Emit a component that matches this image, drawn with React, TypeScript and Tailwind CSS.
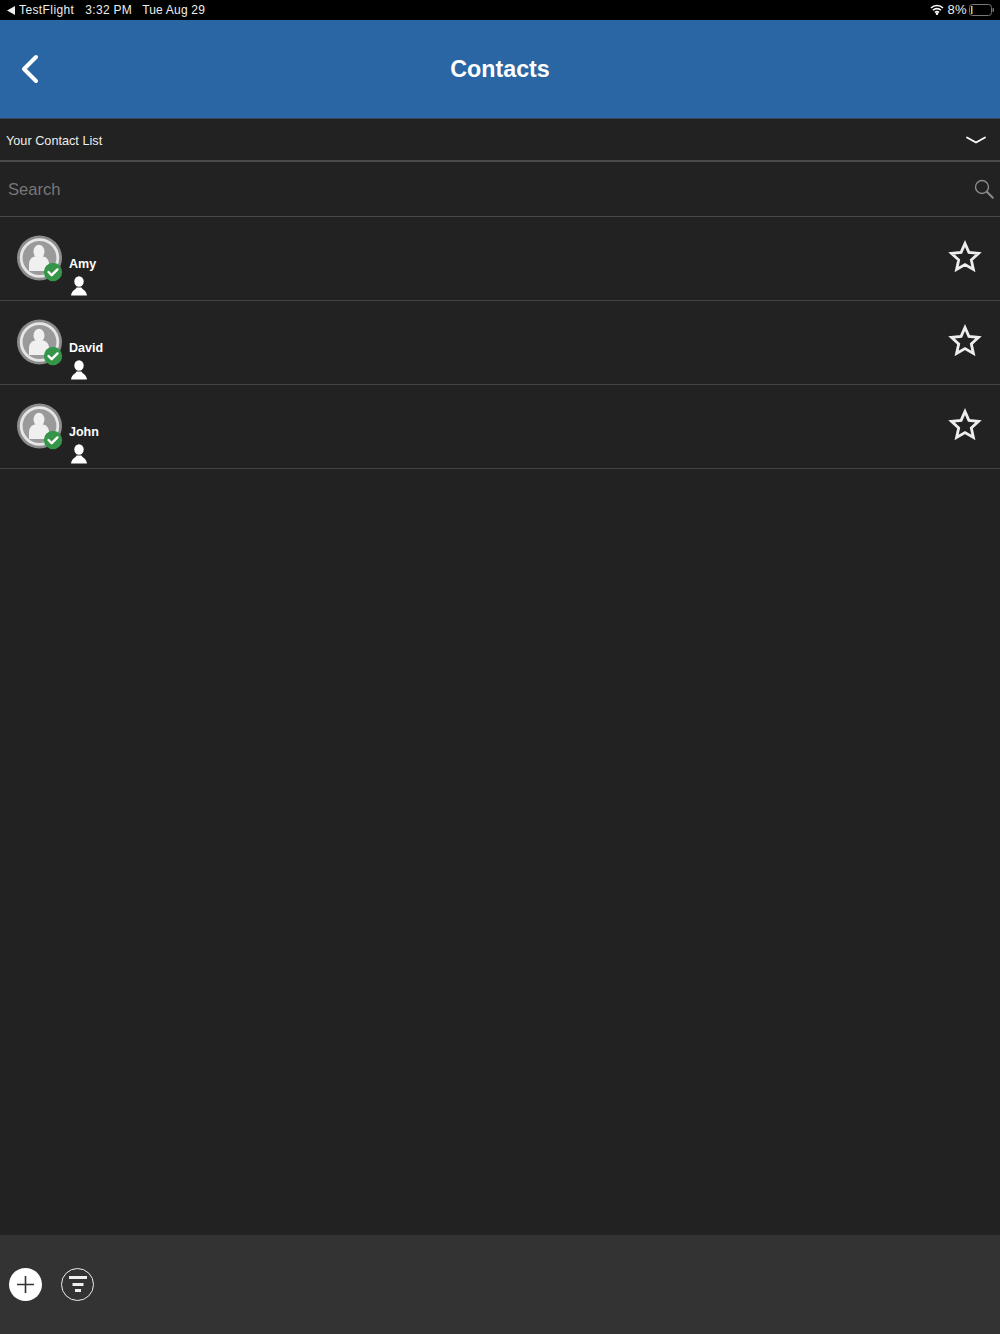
const contacts = ['Amy', 'David', 'John'];

function Avatar() {
  return (
    <svg width="48" height="52" viewBox="0 0 48 52" className="shrink-0">
      <circle cx="23.500" cy="23" r="22.500" fill="#8c8c8c" />
      <circle cx="23.500" cy="23" r="18.300" fill="#9a9a9a" stroke="#e6e6e6" strokeWidth="2.800" />
      <ellipse cx="23" cy="16.500" rx="5.500" ry="6.800" fill="#f0f0f0" />
      <path d="M13 36v-7c0-4 2-6.500 5.500-7.500h9c3.500 1 5.500 3.500 5.500 7.500v7z" fill="#f0f0f0" />
      <circle cx="37" cy="37" r="9.200" fill="#35964a" />
      <path d="M32.500 37l3.200 3.200 5.800-5.800" fill="none" stroke="#ffffff" strokeWidth="2.400" strokeLinecap="round" strokeLinejoin="round" />
    </svg>
  );
}

function Person() {
  return (
    <svg width="16" height="20" viewBox="0 0 16 20" className="block">
      <ellipse cx="8" cy="5.500" rx="4.700" ry="5.300" fill="#ffffff" />
      <path d="M0 19.500c0.300-3 2-5 4.500-6.500l1-1.500h5l1 1.500c2.500 1.500 4.200 3.500 4.500 6.500z" fill="#ffffff" />
    </svg>
  );
}

function Star() {
  return (
    <svg width="34" height="32" viewBox="0 0 34 32">
      <path
        d="M17 3.500l3.900 8.900 9.600 1-7.200 6.500 2.100 9.500-8.400-4.900-8.400 4.900 2.100-9.500-7.200-6.500 9.600-1z"
        fill="none"
        stroke="#eeeeee"
        strokeWidth="2.800"
        strokeLinejoin="miter"
      />
    </svg>
  );
}

export default function App() {
  return (
    <div className="flex h-[1334px] flex-col overflow-hidden bg-[#222222] font-['Liberation_Sans',Arial,sans-serif] text-white">
      <div className="flex h-5 shrink-0 items-center justify-between bg-black pl-[7px] pr-[5px] text-xs tracking-[0.4px] text-[#eeeeee]">
        <div className="flex items-center">
          <svg width="8" height="9" viewBox="0 0 8 9" className="mr-[4px]">
            <path d="M0 4.500L8 0v9z" fill="#eeeeee" />
          </svg>
          <span>TestFlight</span>
          <span className="ml-[11px] tracking-[0.3px]">3:32 PM</span>
          <span className="ml-[10px] tracking-[0.2px]">Tue Aug 29</span>
        </div>
        <div className="flex items-center">
          <svg width="14" height="11" viewBox="0 0 14 11" className="mr-[3px]">
            <path d="M1 4a8.500 8.500 0 0 1 12 0M3 6.300a5.600 5.600 0 0 1 8 0M5 8.500a2.800 2.800 0 0 1 4 0" fill="none" stroke="#ffffff" strokeWidth="1.600" />
            <circle cx="7" cy="9.700" r="1.300" fill="#ffffff" />
          </svg>
          <span className="text-[13px]">8%</span>
          <svg width="26" height="12" viewBox="0 0 26 12" className="ml-[2px]">
            <rect x="0.500" y="0.500" width="22" height="11" rx="3" fill="none" stroke="#777777" />
            <rect x="2" y="2" width="1.500" height="8" fill="#f2c230" />
            <rect x="23.500" y="4" width="1.500" height="4" rx="0.700" fill="#777777" />
          </svg>
        </div>
      </div>

      <div className="relative flex h-[99px] shrink-0 items-center justify-center border-b border-[#35465c] bg-[#2a66a3]">
        <svg width="18" height="30" viewBox="0 0 18 30" className="absolute left-[21px] top-[34px]">
          <path d="M15 3L3 15l12 12" fill="none" stroke="#ffffff" strokeWidth="4" strokeLinecap="round" strokeLinejoin="round" />
        </svg>
        <h1 className="pt-[1px] text-[23.300px] font-bold">Contacts</h1>
      </div>

      <div className="flex h-[43px] shrink-0 items-center justify-between border-b-2 border-[#4a4a4a] pl-[6px] pr-[14px] text-[12.700px] text-[#eeeeee]">
        <span className="pt-[4px]">Your Contact List</span>
        <svg width="20" height="9" viewBox="0 0 20 9" className="mt-[1px]">
          <path d="M1 1.500l9 5 9-5" fill="none" stroke="#ffffff" strokeWidth="1.800" strokeLinecap="round" strokeLinejoin="round" />
        </svg>
      </div>

      <div className="flex h-[55px] shrink-0 items-center justify-between border-b border-[#4a4a4a] pl-2 pr-[6px] text-[16.600px] text-[#777777]">
        <span className="pt-[2px]">Search</span>
        <svg width="20" height="20" viewBox="0 0 20 20">
          <circle cx="8" cy="8" r="6.500" fill="none" stroke="#8a8a8a" strokeWidth="1.400" />
          <path d="M12.800 12.800l6 6" stroke="#8a8a8a" strokeWidth="2" strokeLinecap="round" />
        </svg>
      </div>

      {contacts.map((name) => (
        <div key={name} className="flex h-[84px] shrink-0 border-b border-[#444444] pl-[16px] pr-[18px] pt-[18px]">
          <Avatar />
          <div className="ml-[5px] flex flex-col items-start pt-[21px]">
            <span className="text-[12.500px] font-bold leading-[16px]">{name}</span>
            <div className="ml-[2px] mt-[4px]">
              <Person />
            </div>
          </div>
          <div className="ml-auto pt-[5px]">
            <Star />
          </div>
        </div>
      ))}

      <div className="mt-auto flex h-[99px] shrink-0 items-center gap-[19px] bg-[#333333] pl-[9px]">
        <div className="flex h-[33px] w-[33px] items-center justify-center rounded-full bg-white">
          <svg width="17" height="17" viewBox="0 0 17 17">
            <path d="M8.500 0v17M0 8.500h17" stroke="#333333" strokeWidth="1.600" />
          </svg>
        </div>
        <div className="flex h-[33px] w-[33px] items-center justify-center rounded-full border-[1.500px] border-[#eeeeee]">
          <svg width="18" height="17" viewBox="0 0 18 17">
            <path d="M0 1.500h18M3.500 8.500h11M6 14.500h6" stroke="#eeeeee" strokeWidth="3" />
          </svg>
        </div>
      </div>
    </div>
  );
}
